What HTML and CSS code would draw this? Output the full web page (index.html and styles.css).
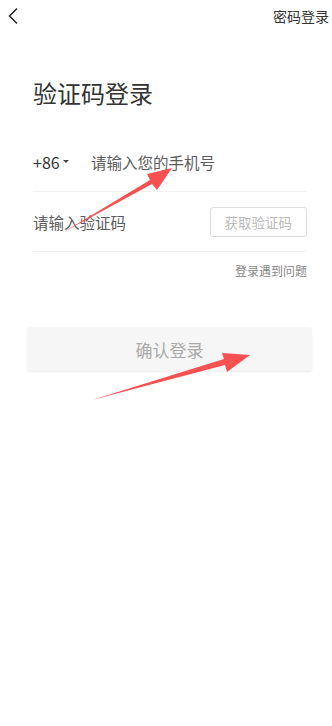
FILE: index.html
```html
<!DOCTYPE html>
<html lang="zh-CN">
<head>
  <meta charset="UTF-8" />
  <meta name="viewport" content="width=device-width, initial-scale=1.0" />
  <title>验证码登录</title>
  <link rel="stylesheet" href="styles.css">
</head>
<body>
  <div class="topbar">
    <svg class="back" width="12" height="18" viewBox="0 0 12 18">
      <path d="M10 1.5 L2.5 9 L10 16.5" fill="none" stroke="#222" stroke-width="1.5"/>
    </svg>
    <span class="switch">密码登录</span>
  </div>

  <h1 class="title">验证码登录</h1>

  <div class="form">
    <div class="row">
      <span class="code">+86<span class="caret"></span></span>
      <span class="placeholder">请输入您的手机号</span>
    </div>
    <div class="row">
      <span class="placeholder">请输入验证码</span>
      <span class="get-code">获取验证码</span>
    </div>
    <div class="help">登录遇到问题</div>
  </div>

  <button class="submit">确认登录</button>

  <svg class="marks" width="332" height="726" viewBox="0 0 332 726">
    <polygon points="62,233 150,180 147,174 172,168 157,190 152,184" fill="#f75152"/>
    <polygon points="92,400 224,359 222,353 250,355 227,372 225,365" fill="#f75152"/>
  </svg>
</body>
</html>
```

FILE: styles.css
```css
body {
  margin: 0;
  width: 332px;
  height: 726px;
  background: #fff;
  font-family: "Noto Sans CJK SC", "Noto Sans", sans-serif;
  color: #333;
  position: relative;
  overflow: hidden;
}

.topbar {
  display: flex;
  justify-content: space-between;
  align-items: center;
  height: 32px;
  padding: 0 3px 0 7px;
}

.back {
  display: block;
}

.switch {
  font-size: 14px;
  color: #333;
}

.title {
  margin: 44px 0 0 33px;
  font-size: 24px;
  font-weight: normal;
  line-height: 34px;
  color: #333;
}

.form {
  margin: 22px 25px 0 33px;
}

.row {
  display: flex;
  align-items: center;
  justify-content: space-between;
  height: 59px;
  border-bottom: 1px solid #f2f2f2;
  font-size: 15.5px;
}

.row:first-child {
  justify-content: flex-start;
}

.code {
  display: flex;
  align-items: center;
  width: 58px;
  color: #333;
  font-size: 16px;
}

.caret {
  margin-left: 3px;
  border-left: 3px solid transparent;
  border-right: 3px solid transparent;
  border-top: 3px solid #444;
}

.placeholder {
  color: #5c5c5c;
}

.get-code {
  padding: 4px 14px;
  border: 1px solid #ddd;
  border-radius: 3px;
  font-size: 13.5px;
  color: #bbb;
}

.help {
  margin-top: 10px;
  text-align: right;
  font-size: 12px;
  color: #888;
}

.submit {
  display: block;
  width: 285px;
  height: 44px;
  margin: 48px 0 0 27px;
  border: none;
  border-radius: 3px;
  background: #f6f6f6;
  box-shadow: 0 1px 2px rgba(0, 0, 0, 0.08);
  font-family: inherit;
  font-size: 17px;
  color: #aaa;
}

.marks {
  position: absolute;
  left: 0;
  top: 0;
  pointer-events: none;
}
```
